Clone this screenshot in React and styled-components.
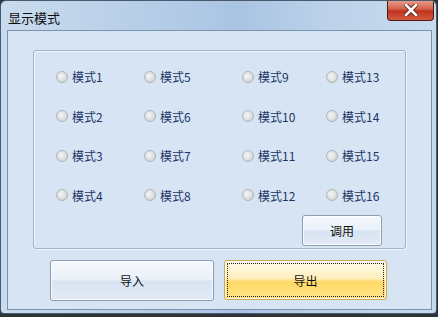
import React, { useState } from 'react';
import styled, { createGlobalStyle } from 'styled-components';

const MODES = [1, 5, 9, 13, 2, 6, 10, 14, 3, 7, 11, 15, 4, 8, 12, 16];

const GlobalStyle = createGlobalStyle`
  html, body {
    margin: 0;
    padding: 0;
    background: #2e3338;
  }
  body {
    font-family: "Noto Sans CJK SC", "Liberation Sans", sans-serif;
  }
`;

const App = () => {
  const [mode, setMode] = useState(null);

  return (
    <>
      <GlobalStyle />
      <Window>
        <TitleBar>
          <Title>显示模式</Title>
          <CloseBtn aria-label="close">
            <svg width="14" height="12" viewBox="0 0 14 12">
              <path d="M2 1 L12 11 M12 1 L2 11" stroke="#5a1b14" strokeWidth="4.4" strokeLinecap="square" />
              <path d="M2 1 L12 11 M12 1 L2 11" stroke="#fff" strokeWidth="2.6" strokeLinecap="square" />
            </svg>
          </CloseBtn>
        </TitleBar>
        <Client>
          <GroupBox>
            <ModeGrid>
              {MODES.map((n) => (
                <RadioItem key={n} onClick={() => setMode(n)}>
                  <RadioDot checked={mode === n} />
                  <span>模式{n}</span>
                </RadioItem>
              ))}
            </ModeGrid>
            <ApplyRow>
              <Btn width="80px" height="31px">调用</Btn>
            </ApplyRow>
          </GroupBox>
          <BtnBox>
            <Btn width="164px" height="41px">导入</Btn>
            <Btn width="163px" height="40px" active>
              <FocusRect>导出</FocusRect>
            </Btn>
          </BtnBox>
        </Client>
      </Window>
    </>
  );
};

const Window = styled.div`
  width: 437px;
  height: 314px;
  border-radius: 6px 6px 4px 4px;
  box-sizing: border-box;
  border: 1px solid #4a5a6c;
  background: linear-gradient(90deg, #c9dbee 0%, #b8cfe8 30%, #a9c4e3 55%, #bcd2ea 75%, #c7d9ed 100%);
  display: flex;
  flex-direction: column;
  overflow: hidden;
`;

const TitleBar = styled.div`
  height: 29px;
  display: flex;
  align-items: flex-start;
  padding-left: 7px;
`;

const Title = styled.div`
  font-size: 13px;
  line-height: 13px;
  margin-top: 10px;
  color: #0c0c0c;
`;

const CloseBtn = styled.button`
  margin-left: auto;
  margin-right: 2px;
  margin-top: -1px;
  width: 47px;
  height: 21px;
  border: 1px solid #4a1d18;
  border-top: none;
  border-radius: 0 0 4px 4px;
  background: linear-gradient(180deg, #e8a091 0%, #d4614c 45%, #c0321d 55%, #d35a3f 100%);
  display: flex;
  align-items: center;
  justify-content: center;
  padding: 0;
  cursor: pointer;
`;

const Client = styled.div`
  flex: 1;
  margin: 0 4px 3px 6px;
  border: 1px solid #7c93ad;
  background: #d6e4f3;
  padding: 19px 25px 7px 25px;
  display: flex;
  flex-direction: column;
`;

const GroupBox = styled.div`
  height: 199px;
  box-sizing: border-box;
  border: 1px solid #a3b4c8;
  border-radius: 3px;
  box-shadow: inset 1px 1px 0 #eef4fb, 1px 1px 0 #eef4fb;
  display: flex;
  flex-direction: column;
  padding: 16px 23px 5px 22px;
`;

const ModeGrid = styled.div`
  display: grid;
  grid-template-columns: 88px 98px 84px auto;
  grid-auto-rows: 39.5px;
  align-items: center;
  margin-top: -10px;
`;

const RadioItem = styled.label`
  display: flex;
  align-items: center;
  gap: 4px;
  font-size: 12px;
  color: #1c3466;
  cursor: pointer;
`;

const RadioDot = styled.span`
  width: 12px;
  height: 12px;
  box-sizing: border-box;
  border-radius: 50%;
  border: 1px solid #b0b4b9;
  background: radial-gradient(circle at 40% 40%, #f6f6f6 0%, #dcdee0 55%, #c2c5c8 100%);
  position: relative;
  &::after {
    content: '';
    display: ${(props) => (props.checked ? 'block' : 'none')};
    position: absolute;
    left: 3px;
    top: 3px;
    width: 4px;
    height: 4px;
    border-radius: 50%;
    background: #2a5da8;
  }
`;

const ApplyRow = styled.div`
  display: flex;
  justify-content: flex-end;
  margin-top: auto;
`;

const Btn = styled.button`
  width: ${(props) => props.width};
  height: ${(props) => props.height};
  box-sizing: border-box;
  border: 1px solid ${(props) => (props.active ? '#c9a94a' : '#8b9cb3')};
  border-radius: 3px;
  background: ${(props) =>
    props.active
      ? 'linear-gradient(180deg, #fffbea 0%, #fff0c0 45%, #ffd966 55%, #ffe48a 100%)'
      : 'linear-gradient(180deg, #f4f8fc 0%, #eaf1f9 48%, #d8e4f2 52%, #e2ebf6 100%)'};
  box-shadow: inset 0 0 0 1px rgba(255, 255, 255, 0.75);
  font-family: "Noto Sans CJK SC", "Liberation Sans", sans-serif;
  font-size: 12px;
  color: #111;
  padding: 2px;
  display: flex;
  align-items: center;
  justify-content: center;
  cursor: pointer;
`;

const FocusRect = styled.span`
  align-self: stretch;
  flex: 1;
  border: 1px dotted #222;
  display: flex;
  align-items: center;
  justify-content: center;
`;

const BtnBox = styled.div`
  display: flex;
  gap: 10px;
  margin-top: 11px;
  padding-left: 17px;
`;

export default App;
